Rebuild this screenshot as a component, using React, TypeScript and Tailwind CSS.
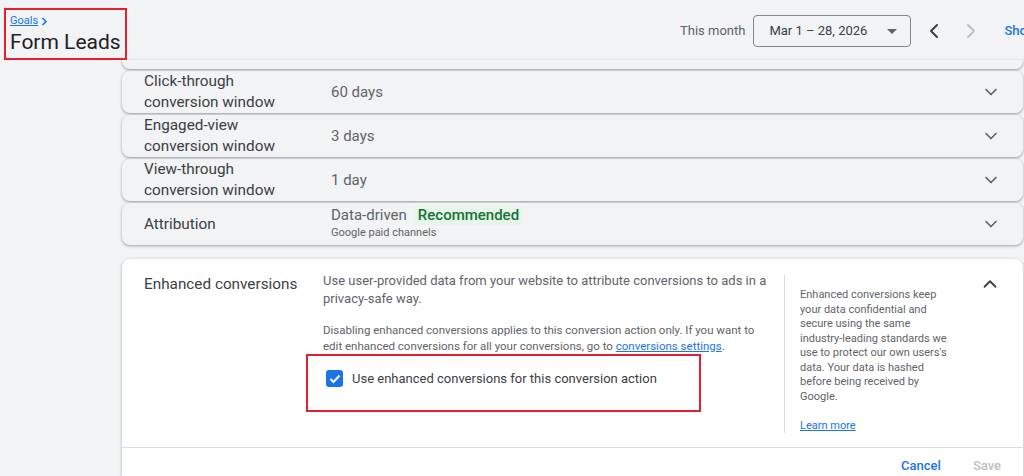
import { ChevronDown, ChevronUp, ChevronLeft, ChevronRight } from "lucide-react";

const rowShadow =
  "shadow-[0_1px_2px_0_rgba(60,64,67,0.3),0_1px_3px_1px_rgba(60,64,67,0.12)]";

function SettingRow({ label, children }: { label: React.ReactNode; children: React.ReactNode }) {
  return (
    <div className={`mt-[2px] flex h-[42px] items-center rounded-[8px] bg-[#f1f3f4] pl-[22px] pr-[22px] ${rowShadow}`}>
      <div className="w-[187px] text-[15.3px] leading-[21px] text-[#3c4043]">{label}</div>
      <div className="flex-1 text-[15px] text-[#5f6368]">{children}</div>
      <ChevronDown className="h-[20px] w-[20px] text-[#5f6368]" strokeWidth={2} />
    </div>
  );
}

export default function App() {
  return (
    <div className="h-[476px] w-full overflow-hidden bg-[#f1f3f4] font-['Roboto','Liberation_Sans',sans-serif]">
      {/* Header */}
      <div className="flex h-[60px] w-[1100px] items-start">
        <div className="ml-[4px] mt-[8px] h-[52px] w-[123px] border-2 border-[#e5202a] px-[4px] pt-[4px]">
          <div className="flex items-center gap-[3px] text-[11px] leading-[14px]">
            <span className="text-[#1a73e8] underline">Goals</span>
            <svg width="7" height="9" viewBox="0 0 7 9" className="mt-[1px]">
              <path d="M1.5 1 L5 4.5 L1.5 8" fill="none" stroke="#1a73e8" strokeWidth="1.6" />
            </svg>
          </div>
          <div className="mt-[1px] whitespace-nowrap text-[21px] leading-[26px] text-[#202124]">Form Leads</div>
        </div>

        <div className="ml-[553px] mt-[15px] flex items-center">
          <span className="mr-[8px] text-[13px] text-[#5f6368]">This month</span>
          <div className="flex h-[32px] w-[158px] items-center justify-between rounded-[4px] border border-[#80868b] pl-[15px] pr-[13px]">
            <span className="text-[13px] text-[#3c4043]">Mar 1 – 28, 2026</span>
            <svg width="10" height="5" viewBox="0 0 10 5">
              <path d="M0 0 L10 0 L5 5 Z" fill="#5f6368" />
            </svg>
          </div>
          <ChevronLeft className="ml-[11px] h-[24px] w-[24px] text-[#3c4043]" strokeWidth={2} />
          <ChevronRight className="ml-[13px] h-[24px] w-[24px] text-[#bdc1c6]" strokeWidth={2} />
          <span className="ml-[21px] text-[13px] font-medium text-[#1a73e8]">Show all</span>
        </div>
      </div>

      {/* Settings rows */}
      <div className="pl-[122px] pr-[1px]">
        <div className={`h-[9px] rounded-b-[8px] bg-[#f1f3f4] ${rowShadow}`} />

        <SettingRow label={<>Click-through<br />conversion window</>}>60 days</SettingRow>
        <SettingRow label={<>Engaged-view<br />conversion window</>}>3 days</SettingRow>
        <SettingRow label={<>View-through<br />conversion window</>}>1 day</SettingRow>
        <SettingRow label="Attribution">
          <div className="-mt-[3px] flex flex-col">
            <div className="flex items-center leading-[19px]">
              <span>Data-driven</span>
              <span className="ml-[8px] bg-[#e6f4ea] px-[3px] font-medium text-[#137333]">Recommended</span>
            </div>
            <span className="text-[11px] leading-[15px] text-[#5f6368]">Google paid channels</span>
          </div>
        </SettingRow>

        {/* Enhanced conversions card */}
        <div className={`mt-[14px] rounded-t-[8px] bg-white ${rowShadow}`}>
          <div className="flex pb-[14px] pl-[22px] pr-[22px] pt-[13px]">
            <div className="mt-[2px] w-[179px] text-[15.3px] leading-[20px] text-[#3c4043]">Enhanced conversions</div>

            <div className="w-[452px]">
              <p className="text-[13px] leading-[18px] text-[#5f6368]">
                Use user-provided data from your website to attribute conversions to ads in a privacy-safe way.
              </p>
              <p className="mt-[14px] w-[440px] text-[11.5px] leading-[16px] text-[#5f6368]">
                Disabling enhanced conversions applies to this conversion action only. If you want to edit enhanced
                conversions for all your conversions, go to{" "}
                <span className="text-[#1a73e8] underline">conversions settings</span>.
              </p>
              <div className="-ml-[17px] h-[58px] w-[395px] border-2 border-[#e5202a] pl-[18px] pt-[13px]">
                <div className="flex items-center">
                  <div className="flex h-[17px] w-[17px] items-center justify-center rounded-[3px] bg-[#1a73e8]">
                    <svg width="12" height="10" viewBox="0 0 12 10">
                      <path d="M1.5 5 L4.5 8 L10.5 1.5" fill="none" stroke="white" strokeWidth="2" />
                    </svg>
                  </div>
                  <span className="ml-[9px] text-[13px] text-[#3c4043]">
                    Use enhanced conversions for this conversion action
                  </span>
                </div>
              </div>
            </div>

            <div className="ml-[9px] mt-[3px] w-[169px] border-l border-[#dadce0] pl-[15px] pt-[13px]">
              <p className="text-[11px] leading-[14.5px] text-[#5f6368]">
                Enhanced conversions keep your data confidential and secure using the same industry-leading standards
                we use to protect our own users's data. Your data is hashed before being received by Google.
              </p>
              <p className="mt-[15px] text-[11px] leading-[14px] text-[#1a73e8] underline">Learn more</p>
            </div>

            <div className="flex flex-1 justify-end">
              <ChevronUp className="mt-[1px] h-[22px] w-[22px] text-[#3c4043]" strokeWidth={2} />
            </div>
          </div>

          <div className="flex items-center justify-end gap-[32px] border-t border-[#dadce0] pr-[22px] pt-[8px]">
            <span className="text-[13px] font-medium text-[#1a73e8]">Cancel</span>
            <span className="text-[13px] font-medium text-[#bdc1c6]">Save</span>
          </div>
        </div>
      </div>
    </div>
  );
}
